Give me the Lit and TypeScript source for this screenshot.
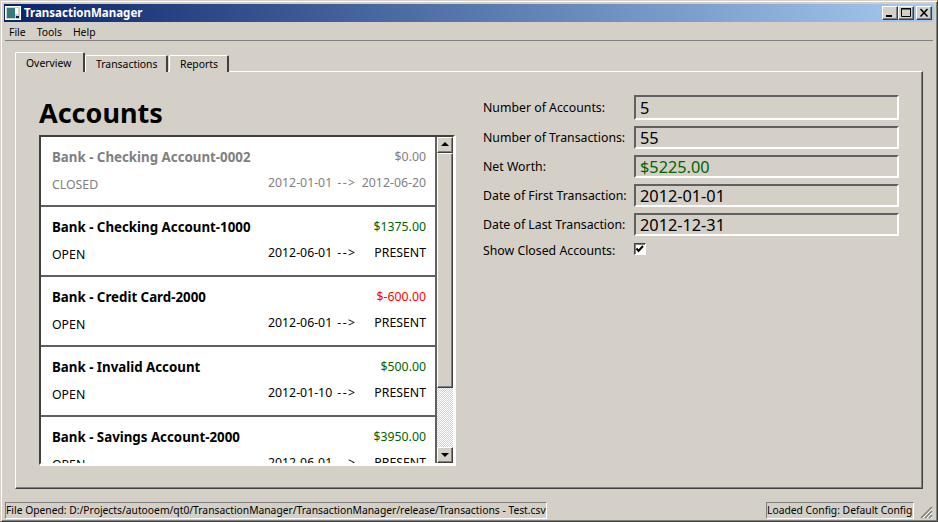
import { LitElement, html, css } from "lit";
import { customElement } from "lit/decorators.js";

interface Account {
  name: string;
  balance: string;
  status: string;
  from: string;
  to: string;
  tone: "closed" | "pos" | "neg";
}

const ACCOUNTS: Account[] = [
  { name: "Bank - Checking Account-0002", balance: "$0.00", status: "CLOSED", from: "2012-01-01", to: "2012-06-20", tone: "closed" },
  { name: "Bank - Checking Account-1000", balance: "$1375.00", status: "OPEN", from: "2012-06-01", to: "PRESENT", tone: "pos" },
  { name: "Bank - Credit Card-2000", balance: "$-600.00", status: "OPEN", from: "2012-06-01", to: "PRESENT", tone: "neg" },
  { name: "Bank - Invalid Account", balance: "$500.00", status: "OPEN", from: "2012-01-10", to: "PRESENT", tone: "pos" },
  { name: "Bank - Savings Account-2000", balance: "$3950.00", status: "OPEN", from: "2012-06-01", to: "PRESENT", tone: "pos" },
];

const STATS = [
  { label: "Number of Accounts:", value: "5" },
  { label: "Number of Transactions:", value: "55" },
  { label: "Net Worth:", value: "$5225.00", green: true },
  { label: "Date of First Transaction:", value: "2012-01-01" },
  { label: "Date of Last Transaction:", value: "2012-12-31" },
];

@customElement("app-root")
export class AppRoot extends LitElement {
  static styles = css`
    :host {
      display: block;
      width: 938px;
      height: 522px;
      font-family: "Noto Sans", sans-serif;
      font-size: 10.4px;
      line-height: 14px;
      color: #000;
    }
    * {
      box-sizing: border-box;
    }
    .window {
      width: 938px;
      height: 522px;
      background: #d4d0c8;
      padding: 4px;
      display: flex;
      flex-direction: column;
      border-top: 1px solid #d4d0c8;
      border-left: 1px solid #d4d0c8;
      border-right: 1px solid #404040;
      border-bottom: 1px solid #404040;
      box-shadow: inset 1px 1px 0 #fff, inset -1px -1px 0 #808080;
      overflow: hidden;
    }
    .titlebar {
      height: 18px;
      flex: none;
      margin: -1px -1px 0 -1px;
      background: linear-gradient(90deg, #0a246a, #a6caf0);
      display: flex;
      align-items: center;
      padding: 0 2px 0 1px;
      gap: 3px;
    }
    .app-icon {
      display: block;
    }
    .title {
      color: #fff;
      font-weight: bold;
      font-size: 11.5px;
      flex: 1;
    }
    .winbtns {
      display: flex;
      align-items: center;
    }
    .winbtn {
      width: 16px;
      height: 14px;
      background: #d4d0c8;
      border: 1px solid;
      border-color: #fff #404040 #404040 #fff;
      box-shadow: inset -1px -1px 0 #808080;
      display: block;
      padding: 0;
    }
    .winbtn svg {
      display: block;
    }
    .winbtn.close {
      margin-left: 2px;
    }
    .menubar {
      height: 17px;
      flex: none;
      display: flex;
      align-items: center;
      gap: 11px;
      padding: 1px 0 0 4px;
      border-bottom: 1px solid #808080;
      box-sizing: content-box;
    }
    .content {
      flex: 1;
      padding: 11px 11px 0 10px;
      display: flex;
      flex-direction: column;
    }
    .tabs {
      display: flex;
      height: 20px;
      align-items: flex-end;
      flex: none;
      margin-bottom: -1px;
      position: relative;
      z-index: 1;
    }
    .tab {
      height: 17px;
      border: 1px solid #fff;
      border-right: 2px solid #404040;
      border-bottom: 0;
      border-radius: 2px 2px 0 0;
      padding: 0 0 0 10px;
      display: flex;
      align-items: center;
      background: #d4d0c8;
    }
    .tab.active {
      height: 20px;
      width: 70px;
    }
    .tab.t2 {
      width: 83px;
    }
    .tab.t3 {
      width: 60px;
      margin-left: 1px;
    }
    .pane {
      height: 418px;
      width: 908px;
      flex: none;
      border: 1px solid;
      border-color: #fff #404040 #404040 #fff;
      box-shadow: inset -1px -1px 0 #808080;
      padding: 23px 23px 0 23px;
      display: flex;
    }
    .left {
      width: 416px;
      flex: none;
    }
    h1 {
      margin: 0;
      height: 40px;
      font-size: 27px;
      line-height: 35px;
      font-weight: bold;
    }
    .list {
      width: 416px;
      height: 330px;
      border: 2px solid;
      border-color: #404040 #fff #fff #404040;
      box-shadow: 1px 1px 0 #fff;
      display: flex;
      overflow: hidden;
    }
    .rows {
      flex: 1;
      overflow: hidden;
      background: #fff;
    }
    .row {
      height: 70px;
      border-bottom: 2px solid #606060;
      border-right: 2px solid #606060;
      padding: 0 9px 0 11px;
      display: grid;
      grid-template-columns: 1fr auto;
      grid-template-rows: 42px 14px;
      align-items: center;
      font-size: 12.3px;
    }
    .row .name {
      font-weight: bold;
      font-size: 13.3px;
      margin-top: -2px;
    }
    .row .bal {
      text-align: right;
      margin-top: -2px;
    }
    .row .dates {
      display: flex;
      justify-content: space-between;
      width: 158px;
      margin-top: -6px;
    }
    .row .status {
      margin-top: -2px;
    }
    .arrow {
      letter-spacing: 1.5px;
      margin-left: 5px;
    }
    .row.closed {
      color: #808080;
    }
    .pos {
      color: #006400;
    }
    .neg {
      color: #f00;
    }
    .scroll {
      width: 16px;
      flex: none;
      display: flex;
      flex-direction: column;
      background-color: #fff;
      background-image: conic-gradient(#d4d0c8 25%, #fff 0 50%, #d4d0c8 0 75%, #fff 0);
      background-size: 2px 2px;
    }
    .sbtn,
    .thumb {
      background: #d4d0c8;
      border: 1px solid;
      border-color: #fff #404040 #404040 #fff;
      box-shadow: inset -1px -1px 0 #808080;
      flex: none;
    }
    .sbtn {
      height: 16px;
    }
    .sbtn svg {
      display: block;
    }
    .thumb {
      height: 235px;
    }
    .track {
      flex: 1;
    }
    .form {
      margin-left: 28px;
      display: grid;
      grid-template-columns: 151px 265px;
      grid-template-rows: 25px repeat(4, 23px) 14px;
      row-gap: 6px;
      align-content: start;
      align-items: center;
      font-size: 12.3px;
    }
    .field {
      height: 100%;
      border: 2px solid;
      border-color: #606060 #fff #fff #606060;
      font-size: 16.3px;
      padding-left: 4px;
      display: flex;
      align-items: center;
    }
    .field.green {
      color: #006400;
    }
    .check {
      width: 12px;
      height: 12px;
      background: #fff;
      border: 1px solid;
      border-color: #404040 #fff #fff #404040;
      box-shadow: inset 1px 1px 0 #808080;
      display: block;
    }
    .check svg {
      display: block;
    }
    .check-row {
      height: 14px;
      display: flex;
      align-items: center;
    }
    .check-label {
      padding-top: 4px;
    }
    .statusbar {
      flex: none;
      height: 18px;
      margin-top: 12px;
      display: flex;
      align-items: center;
      position: relative;
      font-size: 10.3px;
    }
    .sb-cell {
      height: 17px;
      border: 1px solid;
      border-color: #808080 #fff #fff #808080;
      padding: 0;
      display: flex;
      align-items: center;
      white-space: nowrap;
    }
    .sb-left {
      width: 542px;
    }
    .sb-right {
      margin-left: auto;
      margin-right: 19px;
      width: 148px;
    }
    .grip {
      position: absolute;
      right: 0;
      bottom: 0;
    }
  `;

  private renderRow(a: Account) {
    return html`<div class="row ${a.tone === "closed" ? "closed" : ""}">
      <div class="name">${a.name}</div>
      <div class="bal ${a.tone === "closed" ? "" : a.tone}">${a.balance}</div>
      <div class="status">${a.status}</div>
      <div class="dates">
        <span>${a.from}<span class="arrow">--&gt;</span></span><span>${a.to}</span>
      </div>
    </div>`;
  }

  render() {
    return html`<div class="window">
      <div class="titlebar">
        <svg class="app-icon" width="16" height="14" viewBox="0 0 16 14">
          <rect x="0.5" y="0.5" width="15" height="13" fill="#d4d0c8" stroke="#fff" />
          <rect x="2" y="2" width="8" height="10" fill="#2f7d7a" />
          <rect x="10" y="2" width="3" height="6" fill="#fff" />
          <rect x="11" y="10" width="3" height="2" fill="#10204a" />
        </svg>
        <span class="title">TransactionManager</span>
        <div class="winbtns">
          <div class="winbtn">
            <svg width="14" height="12"><rect x="3" y="8" width="6" height="2" fill="#000" /></svg>
          </div>
          <div class="winbtn">
            <svg width="14" height="12"><path d="M2.5 1.5h9v8h-9z M2 2h10" fill="none" stroke="#000" /></svg>
          </div>
          <div class="winbtn close">
            <svg width="14" height="12"><path d="M3.5 2l7 7.5M10.5 2l-7 7.5" stroke="#000" stroke-width="1.6" /></svg>
          </div>
        </div>
      </div>
      <div class="menubar"><span>File</span><span>Tools</span><span>Help</span></div>
      <div class="content">
        <div class="tabs">
          <div class="tab active">Overview</div>
          <div class="tab t2">Transactions</div>
          <div class="tab t3">Reports</div>
        </div>
        <div class="pane">
          <div class="left">
            <h1>Accounts</h1>
            <div class="list">
              <div class="rows">${ACCOUNTS.map((a) => this.renderRow(a))}</div>
              <div class="scroll">
                <div class="sbtn">
                  <svg width="14" height="14"><path d="M7 4l4 4H3z" fill="#000" /></svg>
                </div>
                <div class="thumb"></div>
                <div class="track"></div>
                <div class="sbtn">
                  <svg width="14" height="14"><path d="M3 5h8l-4 4z" fill="#000" /></svg>
                </div>
              </div>
            </div>
          </div>
          <div class="form">
            ${STATS.map(
              (s) => html`<div>${s.label}</div>
                <div class="field ${s.green ? "green" : ""}">${s.value}</div>`
            )}
            <div class="check-row check-label">Show Closed Accounts:</div>
            <div class="check-row">
              <span class="check">
                <svg width="10" height="10"><path d="M1.5 4.5l2 2.4L8 2" fill="none" stroke="#000" stroke-width="2" /></svg>
              </span>
            </div>
          </div>
        </div>
      </div>
      <div class="statusbar">
        <div class="sb-cell sb-left">File Opened: D:/Projects/autooem/qt0/TransactionManager/TransactionManager/release/Transactions - Test.csv</div>
        <div class="sb-cell sb-right">Loaded Config: Default Config</div>
        <svg class="grip" width="14" height="14" viewBox="0 0 14 14">
          <path d="M13 2L2 13M13 6L6 13M13 10L10 13" stroke="#808080" stroke-width="1.5" />
          <path d="M13 4L4 13M13 8L8 13M13 12L12 13" stroke="#fff" />
        </svg>
      </div>
    </div>`;
  }
}
